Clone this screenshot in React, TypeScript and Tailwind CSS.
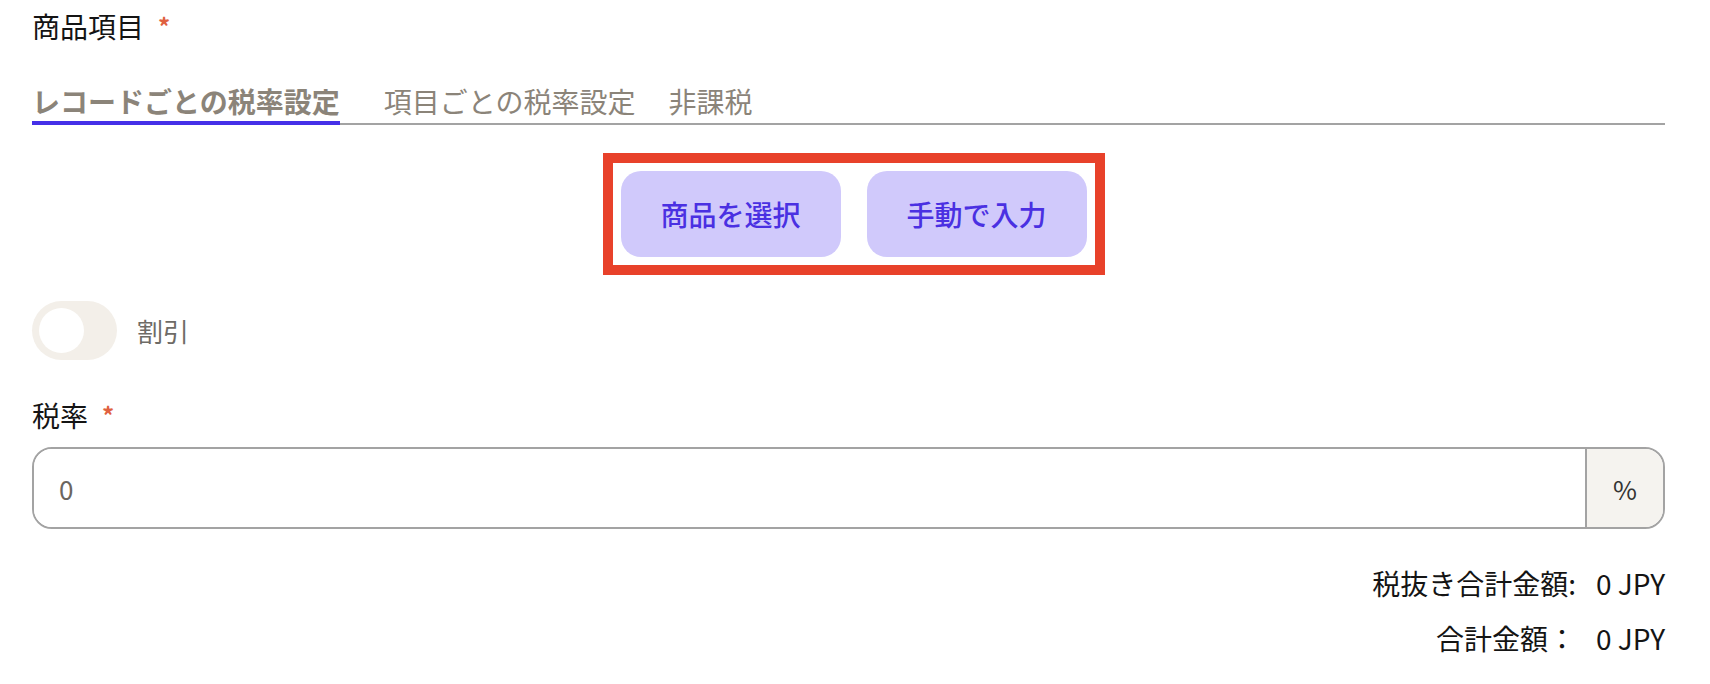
import { useState } from 'react';

const FONT = '"Noto Sans CJK JP", "Noto Sans", sans-serif';

const tabs = ['レコードごとの税率設定', '項目ごとの税率設定', '非課税'];

const Required = () => (
    <span className="ml-[14px] mt-[8px] self-start text-[24px] leading-none font-bold text-[#e0613f]">*</span>
);

export default function App() {
    const [active, setActive] = useState(0);
    const [discount, setDiscount] = useState(false);

    return (
        <div
            className="w-full h-[684px] bg-white pl-[32px] pr-[45px] pt-[6px] text-[#141414] overflow-hidden"
            style={{ fontFamily: FONT }}
        >
            {/* 商品項目 */}
            <div className="flex h-[40px] text-[28px] leading-[40px]">
                <span>商品項目</span>
                <Required />
            </div>

            {/* tabs */}
            <div className="mt-[35px] flex border-b-2 border-[#a3a3a3]">
                {tabs.map((t, i) => (
                    <button
                        key={t}
                        onClick={() => setActive(i)}
                        className={
                            'relative pb-[2px] text-[28px] leading-[40px] text-[#8b8479] ' +
                            (i === 0 ? '' : i === 1 ? 'ml-[44px] ' : 'ml-[33px] ') +
                            (active === i ? 'font-bold' : 'font-normal')
                        }
                    >
                        {t}
                        {active === i && (
                            <span className="absolute left-0 right-0 -bottom-[2px] h-[4px] bg-[#4530e8]" />
                        )}
                    </button>
                ))}
            </div>

            {/* buttons, marked */}
            <div className="mt-[28px] flex justify-center pl-[10px]">
                <div className="flex gap-[26px] border-[10px] border-[#e8412a] p-[8px]">
                    <button className="w-[220px] h-[86px] rounded-[20px] bg-[#d0c9fb] text-[28px] font-medium text-[#4a30e2]">
                        商品を選択
                    </button>
                    <button className="w-[220px] h-[86px] rounded-[20px] bg-[#d0c9fb] text-[28px] font-medium text-[#4a30e2]">
                        手動で入力
                    </button>
                </div>
            </div>

            {/* discount toggle */}
            <div className="mt-[26px] flex items-center gap-[20px]">
                <button
                    onClick={() => setDiscount(!discount)}
                    className={'relative w-[85px] h-[59px] rounded-full ' + (discount ? 'bg-[#4530e8]' : 'bg-[#f3efe9]')}
                >
                    <span
                        className={
                            'absolute top-[7px] w-[45px] h-[45px] rounded-full bg-white ' +
                            (discount ? 'left-[33px]' : 'left-[7px]')
                        }
                    />
                </button>
                <span className="text-[26px] leading-[40px] text-[#6e6b66]">割引</span>
            </div>

            {/* 税率 */}
            <div className="mt-[35px] flex h-[40px] text-[28px] leading-[40px]">
                <span>税率</span>
                <Required />
            </div>
            <div className="mt-[12px] flex h-[82px] rounded-[20px] border-2 border-[#a3a3a3] overflow-hidden">
                <input
                    defaultValue="0"
                    className="flex-1 min-w-0 pl-[25px] text-[26px] text-[#6b665f] outline-none bg-white"
                    style={{ fontFamily: FONT }}
                />
                <div className="w-[78px] flex items-center justify-center border-l-2 border-[#a3a3a3] bg-[#f5f3ef] text-[26px] text-[#333]">
                    %
                </div>
            </div>

            {/* totals */}
            <div className="mt-[34px] flex justify-end gap-[20px] text-[28px] leading-[40px]">
                <span>税抜き合計金額:</span>
                <span>0 JPY</span>
            </div>
            <div className="mt-[15px] flex justify-end gap-[20px] text-[28px] leading-[40px]">
                <span>合計金額：</span>
                <span>0 JPY</span>
            </div>
        </div>
    );
}
